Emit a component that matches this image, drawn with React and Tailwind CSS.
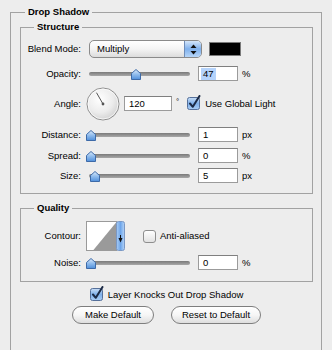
import React from 'react';

const Knob = () => (
    <svg width="10" height="11" viewBox="0 0 10 11">
        <defs>
            <linearGradient id="kb" x1="0" y1="0" x2="0" y2="1">
                <stop offset="0" stopColor="#dcebfb" />
                <stop offset="0.5" stopColor="#8fbbec" />
                <stop offset="1" stopColor="#4f8fdb" />
            </linearGradient>
        </defs>
        <path d="M0.5 10.5 V4.5 L5 0.5 L9.5 4.5 V10.5 Z" fill="url(#kb)" stroke="#3d6aa8" strokeWidth="1" />
    </svg>
);

const Slider = ({ knob }) => (
    <div className="relative w-[104px] h-[12px] flex items-center ml-[5px]">
        <div className="ml-[3px] w-[101px] h-[4px] rounded-full bg-gradient-to-b from-[#7a7a7a] to-[#a8a8a8]" />
        <div className="absolute top-[1px]" style={{ left: knob }}>
            <Knob />
        </div>
    </div>
);

const Field = ({ value, selected, wide }) => (
    <div className={`${wide ? 'w-[48px]' : 'w-[40px]'} h-[15px] bg-white border border-[#9b9b9b] border-t-[#7f7f7f] flex items-center pl-[2px] leading-none`}>
        {selected ? (
            <span className="bg-[#b5d3fb] px-[2px] h-[12px] flex items-center">{value}</span>
        ) : (
            <span className="px-[2px]">{value}</span>
        )}
    </div>
);

const Check = ({ checked }) =>
    checked ? (
        <svg width="14" height="15" viewBox="0 0 14 15">
            <defs>
                <linearGradient id="cb" x1="0" y1="0" x2="0" y2="1">
                    <stop offset="0" stopColor="#c9def6" />
                    <stop offset="0.5" stopColor="#7fb0ea" />
                    <stop offset="1" stopColor="#a9cdf5" />
                </linearGradient>
            </defs>
            <rect x="0.5" y="2.5" width="12" height="12" rx="2" fill="url(#cb)" stroke="#56709a" />
            <path d="M3 8.5 L5.8 11.8 L12.5 1" fill="none" stroke="#1b2a45" strokeWidth="2" strokeLinecap="round" strokeLinejoin="round" />
        </svg>
    ) : (
        <div className="w-[13px] h-[13px] rounded-[3px] border border-[#8e8e8e] bg-gradient-to-b from-white to-[#e2e2e2]" />
    );

const Row = ({ label, className, children }) => (
    <div className={`flex items-center ${className}`}>
        <div className="w-[60px] text-right">{label}</div>
        {children}
    </div>
);

const App = () => {
    return (
        <div className="w-[332px] h-[350px] overflow-hidden bg-[#ededed] text-black text-[9.5px] leading-[12px] font-['Liberation_Sans',Arial,sans-serif] pt-[6px] px-[10px]">
            <fieldset className="border border-[#a2a2a2] h-[400px] pl-[9px] pr-[8px] pt-[3px]">
                <legend className="ml-[5px] px-[3px] font-bold leading-[12px]">Drop Shadow</legend>

                {/* Structure */}
                <fieldset className="border border-[#a2a2a2] h-[173px]">
                    <legend className="ml-[13px] px-[3px] font-bold leading-[12px]">Structure</legend>

                    <Row label="Blend Mode:" className="h-[18px] mt-[7px]">
                        <div className="ml-[8px] w-[113px] h-[18px] rounded-[5px] border border-[#8a8a8a] flex overflow-hidden bg-gradient-to-b from-white via-[#f4f4f4] to-[#dcdcdc]">
                            <div className="flex-1 flex items-center pl-[7px]">Multiply</div>
                            <div className="w-[17px] border-l border-[#6e8cb8] bg-gradient-to-b from-[#d5e6fa] via-[#7fb0ec] to-[#b7d6f8] flex items-center justify-center">
                                <svg width="7" height="11" viewBox="0 0 7 11">
                                    <path d="M3.5 0.5 L6.5 4 H0.5 Z" fill="#111" />
                                    <path d="M3.5 10.5 L6.5 7 H0.5 Z" fill="#111" />
                                </svg>
                            </div>
                        </div>
                        <div className="ml-[7px] w-[32px] h-[14px] bg-black border border-[#7a7a7a]" />
                    </Row>

                    <Row label="Opacity:" className="h-[17px] mt-[7px]">
                        <Slider knob={45} />
                        <div className="ml-[8px]"><Field value="47" selected /></div>
                        <span className="ml-[4px]">%</span>
                    </Row>

                    <Row label="Angle:" className="h-[33px] mt-[5px]">
                        <svg className="ml-[5px]" width="34" height="34" viewBox="0 0 34 34">
                            <defs>
                                <radialGradient id="dial" cx="0.4" cy="0.35" r="0.7">
                                    <stop offset="0" stopColor="#ffffff" />
                                    <stop offset="0.6" stopColor="#ececec" />
                                    <stop offset="1" stopColor="#cfcfcf" />
                                </radialGradient>
                            </defs>
                            <circle cx="17" cy="17" r="16" fill="url(#dial)" stroke="#8d8d8d" />
                            <circle cx="17" cy="17" r="15" fill="none" stroke="#ffffff" strokeOpacity="0.7" />
                            <line x1="17" y1="17" x2="10.5" y2="5.7" stroke="#555" strokeWidth="1" />
                            <circle cx="17" cy="17" r="1.4" fill="#555" />
                        </svg>
                        <div className="ml-[4px]"><Field value="120" wide /></div>
                        <span className="ml-[4px] self-start mt-[9px] text-[8px]">°</span>
                        <div className="ml-[8px] mt-[-2px]"><Check checked /></div>
                        <span className="ml-[4px]">Use Global Light</span>
                    </Row>

                    <Row label="Distance:" className="h-[17px] mt-[6px]">
                        <Slider knob={0} />
                        <div className="ml-[8px]"><Field value="1" /></div>
                        <span className="ml-[4px]">px</span>
                    </Row>

                    <Row label="Spread:" className="h-[17px] mt-[4px]">
                        <Slider knob={0} />
                        <div className="ml-[8px]"><Field value="0" /></div>
                        <span className="ml-[4px]">%</span>
                    </Row>

                    <Row label="Size:" className="h-[17px] mt-[3px]">
                        <Slider knob={4} />
                        <div className="ml-[8px]"><Field value="5" /></div>
                        <span className="ml-[4px]">px</span>
                    </Row>
                </fieldset>

                {/* Quality */}
                <fieldset className="border border-[#a2a2a2] h-[80px] mt-[8px]">
                    <legend className="ml-[13px] px-[3px] font-bold leading-[12px]">Quality</legend>

                    <Row label="Contour:" className="h-[30px] mt-[7px]">
                        <svg className="ml-[5px]" width="39" height="30" viewBox="0 0 39 30">
                            <defs>
                                <linearGradient id="cd" x1="0" y1="0" x2="1" y2="0">
                                    <stop offset="0" stopColor="#a9cdf5" />
                                    <stop offset="0.5" stopColor="#6fa6ea" />
                                    <stop offset="1" stopColor="#b4d4f8" />
                                </linearGradient>
                            </defs>
                            <rect x="0.5" y="0.5" width="30" height="29" fill="#ffffff" stroke="#9a9a9a" />
                            <path d="M7 29.5 L30.5 1 V29.5 Z" fill="#9a9a9a" />
                            <rect x="30.5" y="0.5" width="8" height="29" rx="2" fill="url(#cd)" stroke="#7b98c4" />
                            <path d="M32.5 17 H36.5 L34.5 21.5 Z" fill="#111" />
                            <rect x="34" y="14" width="1" height="4" fill="#111" />
                        </svg>
                        <div className="ml-[18px]"><Check /></div>
                        <span className="ml-[4px]">Anti-aliased</span>
                    </Row>

                    <Row label="Noise:" className="h-[17px] mt-[3px]">
                        <Slider knob={0} />
                        <div className="ml-[8px]"><Field value="0" /></div>
                        <span className="ml-[4px]">%</span>
                    </Row>
                </fieldset>

                <div className="flex items-center justify-center h-[13px] mt-[6px]">
                    <div className="mt-[-2px]"><Check checked /></div>
                    <span className="ml-[4px]">Layer Knocks Out Drop Shadow</span>
                </div>

                <div className="flex justify-center gap-[17px] mt-[5px]">
                    <button className="w-[82px] h-[18px] rounded-full border border-[#7e7e7e] bg-gradient-to-b from-white via-[#f6f6f6] to-[#dedede] leading-none">Make Default</button>
                    <button className="w-[90px] h-[18px] rounded-full border border-[#7e7e7e] bg-gradient-to-b from-white via-[#f6f6f6] to-[#dedede] leading-none">Reset to Default</button>
                </div>
            </fieldset>
        </div>
    );
};

export default App;
